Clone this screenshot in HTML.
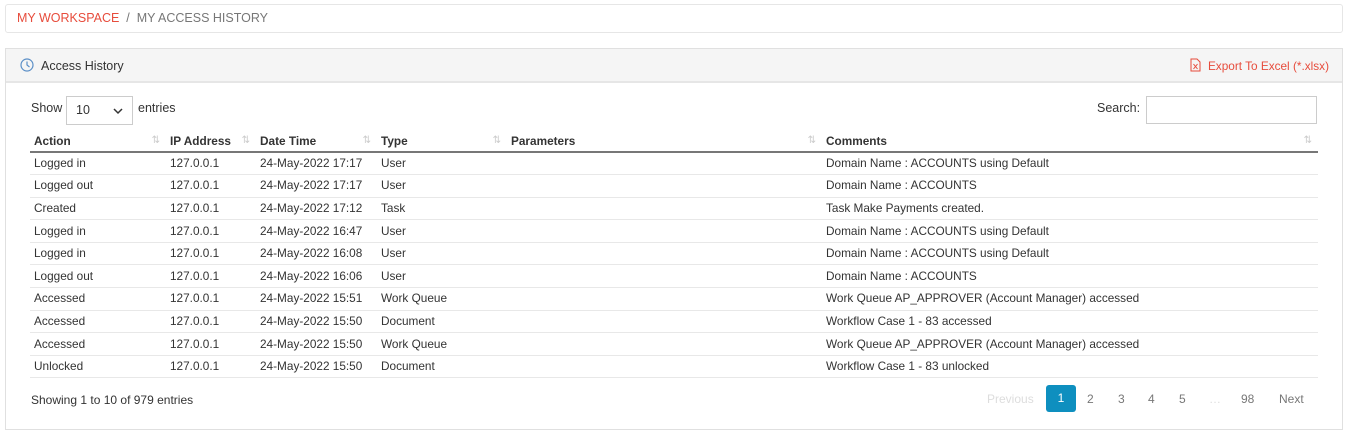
<!DOCTYPE html>
<html><head><style>
*{box-sizing:border-box;margin:0;padding:0}
body{width:1351px;height:444px;background:#fff;font-family:"Liberation Sans",sans-serif;font-size:12px;color:#333;position:relative;overflow:hidden}
.bc{position:absolute;left:5px;top:4px;width:1338px;height:29px;border:1px solid #e6e6e6;border-radius:3px;padding:6px 11px;font-size:12.5px;color:#777}
.bc .r{color:#e74c3c}
.panel{position:absolute;left:5px;top:48px;width:1338px;height:382px;border:1px solid #e0e0e0}
.ph{height:34px;background:#f5f5f5;border-bottom:2px solid #e6e6e6;position:relative}
.ph .t{position:absolute;left:35px;top:10px;font-size:12.5px}
.ph .ex{position:absolute;right:13px;top:10px;color:#e74c3c;font-size:11.8px}
.abs{position:absolute}
table{position:absolute;left:24px;top:82px;width:1288px;border-collapse:collapse;font-size:11.8px}
th{height:21px;text-align:left;font-weight:bold;border-bottom:2px solid #777;padding-left:4px;position:relative}
td{height:22.6px;padding-left:4px;border-bottom:1px solid #e8e8e8;padding-bottom:1px;vertical-align:middle}
th span{position:absolute;right:6px;top:4px;color:#ccc;font-size:10px;font-weight:normal}
.pg{position:absolute;top:336px;font-size:12px;color:#777}
</style></head><body>
<div class="bc"><span class="r">MY WORKSPACE</span> &nbsp;/&nbsp; MY ACCESS HISTORY</div>
<div class="panel">
 <div class="ph">
  <svg class="abs" style="left:14px;top:9px" width="14" height="14" viewBox="0 0 14 14"><circle cx="7" cy="7" r="6" fill="none" stroke="#5b8fc7" stroke-width="1.2"/><path d="M7 3.5V7l2.5 2" fill="none" stroke="#5b8fc7" stroke-width="1.2"/></svg>
  <div class="t">Access History</div>
  <svg class="abs" style="left:1184px;top:9px" width="11" height="14" viewBox="0 0 11 14"><path d="M1 1h6l3 3v9H1z" fill="none" stroke="#e74c3c"/><path d="M3.5 6l4 5M7.5 6l-4 5" stroke="#e74c3c"/></svg>
  <div class="ex">Export To Excel (*.xlsx)</div>
 </div>
 <div class="abs" style="left:25px;top:52px;font-size:12.5px">Show</div>
 <div class="abs" style="left:60px;top:47px;width:67px;height:29px;border:1px solid #ccc;padding:6px 9px;font-size:12.5px">10<svg class="abs" style="left:46px;top:11px" width="10" height="7" viewBox="0 0 10 7"><path d="M1 1l4 4 4-4" fill="none" stroke="#333" stroke-width="1.5"/></svg></div>
 <div class="abs" style="left:132px;top:52px;font-size:12.5px">entries</div>
 <div class="abs" style="left:1091px;top:52px;font-size:12.5px">Search:</div>
 <div class="abs" style="left:1140px;top:47px;width:171px;height:28px;border:1px solid #ccc"></div>
 <table>
  <tr><th style="width:136px">Action<span>⇅</span></th><th style="width:90px">IP Address<span>⇅</span></th><th style="width:121px">Date Time<span>⇅</span></th><th style="width:130px">Type<span>⇅</span></th><th style="width:315px">Parameters<span>⇅</span></th><th>Comments<span>⇅</span></th></tr>
  <tr><td>Logged in</td><td>127.0.0.1</td><td>24-May-2022 17:17</td><td>User</td><td></td><td>Domain Name : ACCOUNTS using Default</td></tr>
  <tr><td>Logged out</td><td>127.0.0.1</td><td>24-May-2022 17:17</td><td>User</td><td></td><td>Domain Name : ACCOUNTS</td></tr>
  <tr><td>Created</td><td>127.0.0.1</td><td>24-May-2022 17:12</td><td>Task</td><td></td><td>Task Make Payments created.</td></tr>
  <tr><td>Logged in</td><td>127.0.0.1</td><td>24-May-2022 16:47</td><td>User</td><td></td><td>Domain Name : ACCOUNTS using Default</td></tr>
  <tr><td>Logged in</td><td>127.0.0.1</td><td>24-May-2022 16:08</td><td>User</td><td></td><td>Domain Name : ACCOUNTS using Default</td></tr>
  <tr><td>Logged out</td><td>127.0.0.1</td><td>24-May-2022 16:06</td><td>User</td><td></td><td>Domain Name : ACCOUNTS</td></tr>
  <tr><td>Accessed</td><td>127.0.0.1</td><td>24-May-2022 15:51</td><td>Work Queue</td><td></td><td>Work Queue AP_APPROVER (Account Manager) accessed</td></tr>
  <tr><td>Accessed</td><td>127.0.0.1</td><td>24-May-2022 15:50</td><td>Document</td><td></td><td>Workflow Case 1 - 83 accessed</td></tr>
  <tr><td>Accessed</td><td>127.0.0.1</td><td>24-May-2022 15:50</td><td>Work Queue</td><td></td><td>Work Queue AP_APPROVER (Account Manager) accessed</td></tr>
  <tr><td>Unlocked</td><td>127.0.0.1</td><td>24-May-2022 15:50</td><td>Document</td><td></td><td>Workflow Case 1 - 83 unlocked</td></tr>
 </table>
 <div class="abs" style="left:25px;top:344px;color:#333">Showing 1 to 10 of 979 entries</div>
 <div class="pg" style="left:981px;top:343px;color:#ddd">Previous</div>
 <div class="abs" style="left:1040px;top:336px;width:30px;height:27px;background:#0e8fbf;border-radius:3px;color:#fff;text-align:center;line-height:27px">1</div>
 <div class="pg" style="left:1081px;top:343px">2</div>
 <div class="pg" style="left:1112px;top:343px">3</div>
 <div class="pg" style="left:1142px;top:343px">4</div>
 <div class="pg" style="left:1173px;top:343px">5</div>
 <div class="pg" style="left:1203px;top:343px;color:#ddd">…</div>
 <div class="pg" style="left:1235px;top:343px">98</div>
 <div class="pg" style="left:1273px;top:343px">Next</div>
</div>
</body></html>
